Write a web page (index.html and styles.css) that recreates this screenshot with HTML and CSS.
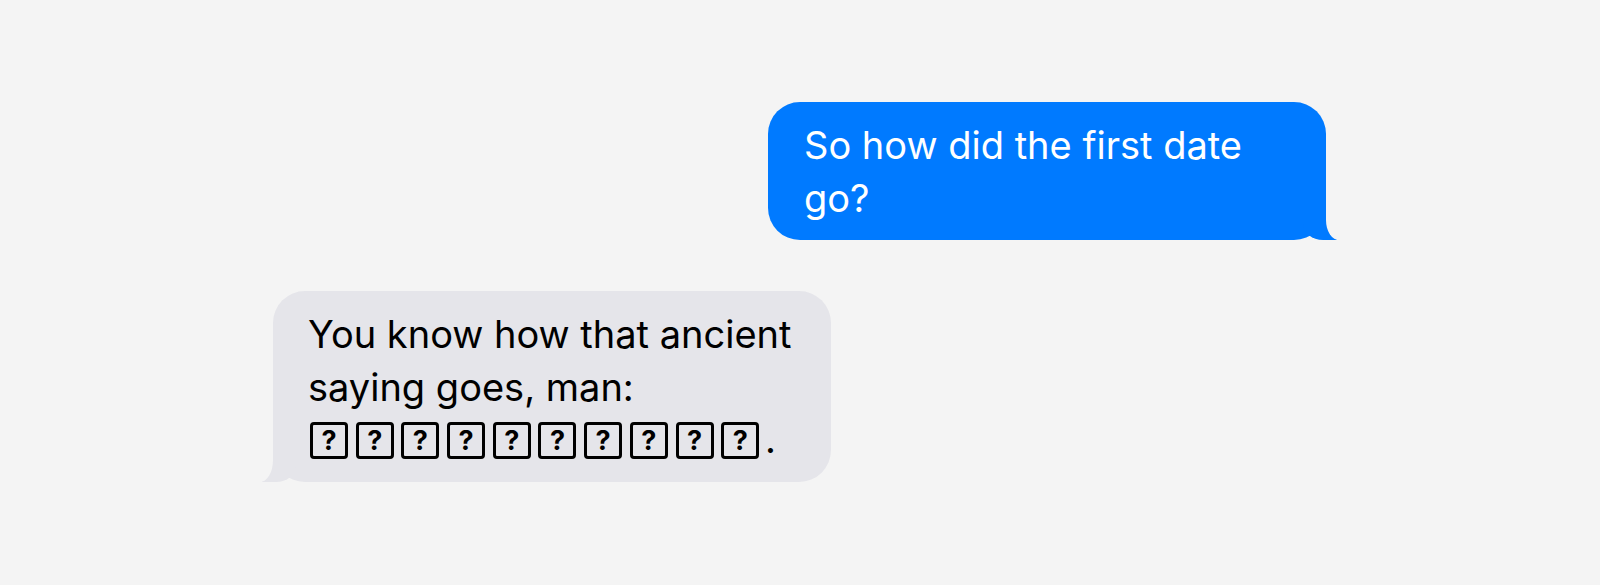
FILE: index.html
```html
<!DOCTYPE html>
<html lang="en">
<head>
<meta charset="utf-8">
<title>Messages</title>
<link rel="stylesheet" href="styles.css">
</head>
<body>
  <main class="chat">
    <div class="bubble sent">So how did the first date go?</div>
    <div class="bubble received">You know how that ancient saying goes, man: <span class="tofu-row"><span class="tofu">?</span><span class="tofu">?</span><span class="tofu">?</span><span class="tofu">?</span><span class="tofu">?</span><span class="tofu">?</span><span class="tofu">?</span><span class="tofu">?</span><span class="tofu">?</span><span class="tofu">?</span>.</span></div>
  </main>
</body>
</html>
```

FILE: styles.css
```css
html, body {
  margin: 0;
  padding: 0;
  background: #f4f4f4;
}

body {
  font-family: Inter, "Noto Sans", "Liberation Sans", sans-serif;
}

.chat {
  display: flex;
  flex-direction: column;
  gap: 51px;
  padding: 102px 274px 0 273px;
}

.bubble {
  position: relative;
  box-sizing: border-box;
  width: 558px;
  padding: 17px 30px 16px 36px;
  border-radius: 32px;
  font-size: 38px;
  line-height: 52.5px;
  font-weight: 400;
}

.bubble::before,
.bubble::after {
  content: "";
  position: absolute;
  bottom: 0;
  height: 36px;
}

.sent {
  align-self: flex-end;
  background: #007aff;
  color: #fff;
}

.sent::before {
  right: -11px;
  width: 34px;
  background: #007aff;
  border-bottom-left-radius: 20px 16px;
}

.sent::after {
  right: -40px;
  width: 40px;
  background: #f4f4f4;
  border-bottom-left-radius: 13px 20px;
}

.received {
  align-self: flex-start;
  background: #e5e5ea;
  color: #000;
  padding-left: 35px;
}

.received::before {
  left: -11px;
  width: 34px;
  background: #e5e5ea;
  border-bottom-right-radius: 20px 16px;
}

.received::after {
  left: -40px;
  width: 40px;
  background: #f4f4f4;
  border-bottom-right-radius: 13px 22px;
}

.tofu-row {
  white-space: nowrap;
}

.tofu {
  display: inline-block;
  box-sizing: border-box;
  width: 38px;
  height: 37px;
  margin-left: 2px;
  margin-right: 5.7px;
  border: 3px solid #000;
  border-radius: 4px;
  font-size: 27px;
  font-weight: 700;
  line-height: 31px;
  text-align: center;
  vertical-align: 3px;
}
```
